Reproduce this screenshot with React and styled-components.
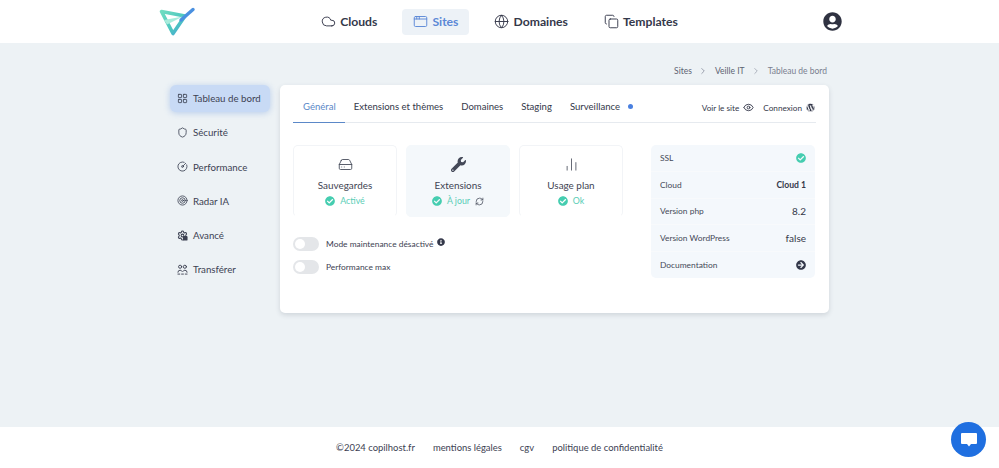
import React from "react";
import styled, { createGlobalStyle } from "styled-components";
import { Cloud, AppWindow, Globe, Copy, ChevronRight, Eye, LayoutGrid, Shield, CircleGauge, Target, Settings, HardDrive, ChartNoAxesColumn, RefreshCw } from "lucide-react";
import { FaWrench, FaCheckCircle, FaInfoCircle, FaArrowCircleRight, FaWordpress, FaUserCircle } from "react-icons/fa";

const Global = createGlobalStyle`
  html, body { margin: 0; padding: 0; height: 100%; }
  body { font-family: "Lato", "Open Sans", "Liberation Sans", sans-serif; color: #34384a; background: #fff; }
  #root { height: 100%; }
  * { box-sizing: border-box; }
`;
const Page = styled.div`position: relative; height: 468px; display: flex; flex-direction: column; overflow: hidden;`;
const Header = styled.header`height: 43px; background: #fff; display: flex; align-items: center; justify-content: space-between; padding: 0 157px 0 158px;`;
const Logo = styled.svg`width: 38px; height: 32px; display: block; margin-top: 1px;`;
const Nav = styled.nav`display: flex; align-items: center; margin-right: 20px;`;
const NavItem = styled.a`
  display: flex; align-items: center; gap: 4px; height: 26px; padding: 0 ${p => p.$active ? "11px" : "0"};
  margin-right: ${p => p.$gap}px;
  border-radius: 4px; font-size: 12.2px; font-weight: 700;
  color: ${p => p.$active ? "#5b88d6" : "#34384a"}; background: ${p => p.$active ? "#edf2f7" : "transparent"};
`;
const Avatar = styled.div`display: flex; color: #2f3241;`;
const Main = styled.main`flex: 1; background: #edf2f5; display: flex; justify-content: center;`;
const Shell = styled.div`width: 659px; display: grid; grid-template-columns: 100px 549px; column-gap: 10px; grid-template-rows: 42px auto; `;
const Breadcrumb = styled.div`grid-column: 2; display: flex; justify-content: flex-end; align-items: center; gap: 6.5px; padding: 14px 2px 0 0; height: 42px; font-size: 8.5px; color: #5d6372;`;
const Crumb = styled.span`color: ${p => p.$last ? "#7a8090" : "#5d6372"};`;
const Side = styled.aside`grid-column: 1; grid-row: 2; display: flex; flex-direction: column; gap: 7.3px;`;
const SideItem = styled.a`
  height: 27px; display: flex; align-items: center; gap: 5px; padding: 0 0 1px 7px; font-size: 9.7px; border-radius: 6px; color: #3c4152;
  background: ${p => p.$active ? "#c8daf5" : "transparent"};
  box-shadow: ${p => p.$active ? "0 1px 6px rgba(120,160,225,.45)" : "none"};
`;
const Card = styled.section`grid-column: 2; grid-row: 2; height: 228px; background: #fff; border-radius: 5px; box-shadow: 0 2px 5px rgba(50,60,80,.16); padding: 0 13px;`;
const TabBar = styled.div`height: 38px; display: flex; align-items: stretch; border-bottom: 1px solid #e6eaef; font-size: 9.55px;`;
const Tab = styled.a`
  display: flex; align-items: center; gap: 8px; padding: 7px 0 2px; margin-right: ${p => p.$gap}px; color: ${p => p.$active ? "#5b88c8" : "#34384a"};
  ${p => p.$active && "padding-left: 10px; padding-right: 9px; margin-bottom: -1px; border-bottom: 1px solid #5b88c8;"}
`;
const Dot = styled.i`width: 5px; height: 5px; border-radius: 50%; background: #4a80e0;`;
const TabActions = styled.div`margin-left: auto; display: flex; align-items: center; gap: 9px; padding: 8px 1px 0 0; font-size: 8.2px;`;
const Action = styled.span`display: flex; align-items: center; gap: 4px;`;
const Body = styled.div`display: grid; grid-template-columns: 330px 164px; column-gap: 28px; padding-top: 22px;`;
const Tiles = styled.div`display: flex; gap: 9px;`;
const Tile = styled.div`
  width: 104.5px; height: 72px; border-radius: 5px; display: flex; flex-direction: column; align-items: center; padding-top: 10px; color: #444958;
  background: ${p => p.$alt ? "#f4f8fb" : "#fff"};
  border: 1px solid ${p => p.$alt ? "#f4f8fb" : "#f2f4f7"}; border-bottom-color: ${p => p.$alt ? "#f4f8fb" : "#fff"};
`;
const TileIcon = styled.div`height: 16px; display: flex; align-items: center; justify-content: center;`;
const TileLabel = styled.div`margin-top: 7px; font-size: 9.9px; line-height: 13px; color: #3e4352;`;
const Status = styled.div`margin-top: 3px; display: flex; align-items: center; gap: 5px; font-size: 8.8px; line-height: 12px; color: #58cdb6; svg.ok { color: #45cdb0; }`;
const Toggles = styled.div`margin-top: 19px; display: flex; flex-direction: column; gap: 8px;`;
const ToggleRow = styled.div`display: flex; align-items: center; gap: 7px; font-size: 8.4px; height: 15px; color: #3c4152;`;
const Toggle = styled.span`width: 26px; height: 14px; border-radius: 7px; background: #e4e6e9; padding: 2px; display: flex;`;
const Knob = styled.i`width: 10px; height: 10px; background: #fff; border-radius: 50%;`;
const InfoMark = styled.span`display: flex; margin: -3px 0 0 -3px; color: #34384a;`;
const Panel = styled.div`height: 133px; background: #f4f8fc; border-radius: 5px; display: flex; flex-direction: column;`;
const PanelRow = styled.div`
  flex: 1; display: flex; align-items: center; justify-content: space-between; padding: 0 9px; font-size: 8.4px; color: #444958;
  & + & { border-top: 1px solid #f8fafc; }
`;
const PanelValue = styled.span`font-size: ${p => p.$bold ? "8.6px" : "10px"}; font-weight: ${p => p.$bold ? 700 : 400}; color: #34384a; display: flex;`;
const Footer = styled.footer`height: 41px; background: #fff; display: flex; align-items: center; justify-content: center; gap: 18px; font-size: 9.45px; color: #3c4152; padding-bottom: 1px;`;
const Chat = styled.button`
  position: absolute; left: 951px; top: 422px; width: 35px; height: 35px; border-radius: 50%; border: 0; padding: 0;
  background: #1f6fe0; display: flex; align-items: center; justify-content: center;
`;

const TransferIcon = ({ size = 12 }) => (
  <svg width={size} height={size} viewBox="0 0 12 12" fill="none" stroke="currentColor" strokeWidth="1" strokeLinecap="round">
    <circle cx="3.4" cy="3" r="1.7" />
    <circle cx="8.6" cy="3" r="1.7" />
    <path d="M1 9 Q1 6.8 3.4 6.8 Q5 6.8 5.5 8" />
    <path d="M6.5 8 Q7 6.8 8.6 6.8 Q11 6.8 11 9" />
    <path d="M1 11 H3 M5 11 H7 M9 11 H11" />
  </svg>
);

const AdvancedIcon = ({ size = 11 }) => (
  <svg width={size} height={size} viewBox="0 0 12 12">
    <foreignObject width="0" height="0" />
    <g transform="scale(.5)"><Settings size={24} strokeWidth={2.2} x="0" y="0" /></g>
    <rect x="6.5" y="6.5" width="5" height="5" rx="1" fill="#3c4152" />
  </svg>
);

const navItems = [
  ["Clouds", Cloud, false, 25], ["Sites", AppWindow, true, 25], ["Domaines", Globe, false, 36], ["Templates", Copy, false, 0],
];
const sideItems = [
  ["Tableau de bord", LayoutGrid, true], ["Sécurité", Shield], ["Performance", CircleGauge], ["Radar IA", Target], ["Avancé", AdvancedIcon], ["Transférer", TransferIcon],
];
const tabs = [["Général", 9, true], ["Extensions et thèmes", 18], ["Domaines", 18], ["Staging", 18], ["Surveillance", 0]];
const Check = () => <FaCheckCircle className="ok" size={10} />;

export default function App() {
  return (
    <Page>
      <Global />
      <Header>
        <Logo viewBox="0 0 38 32">
          <defs>
            <linearGradient id="lg" x1="0" y1="0" x2="1" y2="1">
              <stop offset="0" stopColor="#6fdcc0" />
              <stop offset="0.6" stopColor="#4cc6c0" />
              <stop offset="1" stopColor="#4aa0d8" />
            </linearGradient>
          </defs>
          <path d="M3.5 5.5 L27 10 L15 27.5 Z" fill="none" stroke="url(#lg)" strokeWidth="3.6" strokeLinejoin="round" />
          <path d="M6 14 L25 10.5 L9 18.5 Z" fill="#a8ecdc" />
          <path d="M23 14 L35 3.5" stroke="#4a90e0" strokeWidth="3.4" strokeLinecap="round" />
        </Logo>
        <Nav>
          {navItems.map(([t, I, a, g]) => (
            <NavItem key={t} $active={a} $gap={g}><I size={15} strokeWidth={1.5} />{t}</NavItem>
          ))}
        </Nav>
        <Avatar><FaUserCircle size={19} /></Avatar>
      </Header>
      <Main>
        <Shell>
          <Breadcrumb>
            <Crumb>Sites</Crumb><ChevronRight size={10} color="#8a90a0" />
            <Crumb>Veille IT</Crumb><ChevronRight size={10} color="#a0a6b2" />
            <Crumb $last>Tableau de bord</Crumb>
          </Breadcrumb>
          <Side>
            {sideItems.map(([t, I, a]) => (
              <SideItem key={t} $active={a}><I size={11} strokeWidth={1.8} />{t}</SideItem>
            ))}
          </Side>
          <Card>
            <TabBar>
              {tabs.map(([t, g, a]) => (
                <Tab key={t} $gap={g} $active={a}>{t}{t === "Surveillance" && <Dot />}</Tab>
              ))}
              <TabActions>
                <Action>Voir le site <Eye size={11} /></Action>
                <Action>Connexion <FaWordpress size={9} /></Action>
              </TabActions>
            </TabBar>
            <Body>
              <div>
                <Tiles>
                  <Tile>
                    <TileIcon><HardDrive size={15} strokeWidth={1.4} /></TileIcon>
                    <TileLabel>Sauvegardes</TileLabel>
                    <Status><Check />Activé</Status>
                  </Tile>
                  <Tile $alt>
                    <TileIcon><FaWrench size={15} /></TileIcon>
                    <TileLabel>Extensions</TileLabel>
                    <Status><Check />À jour <RefreshCw size={9} color="#444958" /></Status>
                  </Tile>
                  <Tile>
                    <TileIcon><ChartNoAxesColumn size={15} strokeWidth={1.3} /></TileIcon>
                    <TileLabel>Usage plan</TileLabel>
                    <Status><Check />Ok</Status>
                  </Tile>
                </Tiles>
                <Toggles>
                  <ToggleRow><Toggle><Knob /></Toggle>Mode maintenance désactivé <InfoMark><FaInfoCircle size={8} /></InfoMark></ToggleRow>
                  <ToggleRow><Toggle><Knob /></Toggle>Performance max</ToggleRow>
                </Toggles>
              </div>
              <Panel>
                <PanelRow>SSL <FaCheckCircle size={10} color="#45cdb0" /></PanelRow>
                <PanelRow>Cloud <PanelValue $bold>Cloud 1</PanelValue></PanelRow>
                <PanelRow>Version php <PanelValue>8.2</PanelValue></PanelRow>
                <PanelRow>Version WordPress <PanelValue>false</PanelValue></PanelRow>
                <PanelRow>Documentation <PanelValue><FaArrowCircleRight size={10} /></PanelValue></PanelRow>
              </Panel>
            </Body>
          </Card>
        </Shell>
      </Main>
      <Footer>
        <span>©2024 copilhost.fr</span><span>mentions légales</span><span>cgv</span><span>politique de confidentialité</span>
      </Footer>
      <Chat aria-label="chat">
        <svg width="18" height="16" viewBox="0 0 18 16"><path d="M2 1 H16 Q17 1 17 2 V11 Q17 12 16 12 H11 L9 14.5 L7 12 H2 Q1 12 1 11 V2 Q1 1 2 1 Z" fill="#fff" /></svg>
      </Chat>
    </Page>
  );
}
